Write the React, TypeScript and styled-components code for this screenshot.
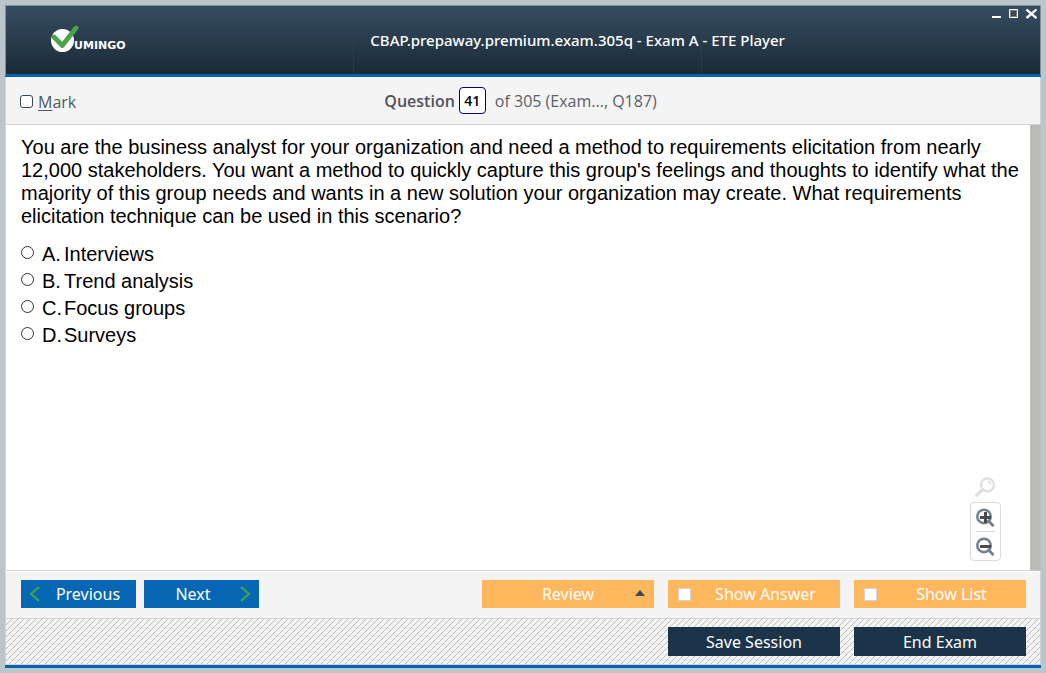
import React from "react";
import styled, { createGlobalStyle } from "styled-components";

const ui = '"Open Sans", "Noto Sans", sans-serif';
const buttonFont = '"Noto Sans", "Open Sans", sans-serif';
const columns = "minmax(0, 348fr) minmax(0, 348fr) minmax(0, 340fr)";

const GlobalStyle = createGlobalStyle`
  *, *::before, *::after { box-sizing: border-box; }
  body { margin: 0; background: #bac6cc; font-family: ${ui}; }
  button, input { font: inherit; margin: 0; }
  button { cursor: pointer; }
`;

const Frame = styled.div`
  min-height: 100vh;
  padding: 5px;
  display: flex;
  flex-direction: column;
  background: #bac6cc;
`;

const PlayerWindow = styled.div`
  flex: 1;
  display: flex;
  flex-direction: column;
  border-bottom: 3px solid #0462b3;
`;

const Header = styled.header`
  position: relative;
  height: 72px;
  display: grid;
  grid-template-columns: ${columns};
  background: linear-gradient(#364e62, #1b2936);
  border: 1px solid #7f9097;
  border-bottom: 3px solid #0462b3;
`;

const HeaderCell = styled.div<{ $divided?: boolean }>`
  display: flex;
  align-items: center;
  white-space: nowrap;
  border-left: ${(p) => (p.$divided ? "1px dotted #323f72" : "0")};
`;

const LogoCell = styled(HeaderCell)`
  padding-left: 44px;
`;

const Title = styled.h1`
  position: relative;
  z-index: 1;
  margin: 0;
  padding-left: 16px;
  color: #fff;
  font: 500 15px/24px ${buttonFont};
`;

const WindowControls = styled.div`
  position: absolute;
  top: 0;
  right: 0;
  display: flex;
`;

const ControlButton = styled.button`
  display: block;
  width: 18px;
  height: 16px;
  padding: 0;
  border: 0;
  background: none;
  svg { display: block; margin: auto; }
`;

const Toolbar = styled.div`
  height: 48px;
  display: grid;
  grid-template-columns: ${columns};
  align-items: center;
  background: #f4f4f4;
  border: 1px solid #d3d3d3;
  border-top: 0;
  color: #5a6066;
  white-space: nowrap;
`;

const MarkLabel = styled.label`
  display: flex;
  align-items: center;
  gap: 5px;
  padding: 2px 0 0 14px;
  font-size: 16px;
  line-height: 24px;
  color: #4a5b69;
  u { text-underline-offset: 2px; }
`;

const MarkBox = styled.input`
  appearance: none;
  width: 13px;
  height: 13px;
  border: 1px solid #34495c;
  border-radius: 3px;
  background: #fff;
  &:checked { background: #34495c; }
`;

const Position = styled.div`
  display: flex;
  align-items: center;
  padding-left: 31px;
  font-size: 16px;
  line-height: 24px;
  label { font-weight: 600; color: #4f5357; }
`;

const NumberInput = styled.input`
  width: 27px;
  height: 27px;
  margin: 0 9px 0 4px;
  padding: 0;
  border: 1px solid #000080;
  border-radius: 4px;
  background: #fff;
  color: #000;
  text-align: center;
  font: 600 14px/24px ${ui};
`;

const Content = styled.main`
  position: relative;
  flex: 1;
  padding: 11px 8px 16px 15px;
  background: #fff;
  border-left: 1px solid #d3d3d3;
  border-right: 11px solid #bcbab6;
  border-bottom: 1px solid #d3d3d3;
  color: #000;
  font-family: "Liberation Sans", Arial, sans-serif;
  font-size: 20px;
  line-height: 23px;
`;

const QuestionText = styled.p`
  margin: 0 0 13px;
`;

const Choices = styled.fieldset`
  margin: 0;
  padding: 0;
  border: 0;
`;

const Choice = styled.label`
  display: grid;
  grid-template-columns: 21px 22px 1fr;
  height: 27px;
  line-height: 24px;
  padding-top: 1px;
`;

const Radio = styled.input`
  appearance: none;
  width: 13px;
  height: 13px;
  border: 1px solid #333;
  border-radius: 50%;
  background: #fff;
  ${Choice} > & { margin-top: 4px; }
  &:checked { background: radial-gradient(#222 35%, #fff 45%); }
`;

const ZoomTools = styled.div`
  position: absolute;
  right: 29px;
  bottom: 9px;
  width: 31px;
  display: flex;
  flex-direction: column;
  align-items: center;
  gap: 5px;
`;

const ZoomPanel = styled.div`
  width: 31px;
  height: 59px;
  display: flex;
  flex-direction: column;
  padding: 0 5px;
  border: 1px solid #dcdcdc;
  border-radius: 4px;
  background: #fff;
`;

const ZoomButton = styled.button`
  flex: 1;
  display: flex;
  align-items: center;
  justify-content: center;
  padding: 0;
  border: 0;
  background: none;
  & + & { border-top: 1px solid #dcdcdc; }
`;

const NavBar = styled.nav`
  display: flex;
  gap: 8px;
  height: 48px;
  padding: 8px 14px 0 15px;
  background: #f4f4f4;
  border: 1px solid #d3d3d3;
  border-top: 1px solid #fff;
`;

const Group = styled.div`
  display: flex;
  gap: 14px;
  margin-left: auto;
`;

const NavButton = styled.button<{ $forward?: boolean }>`
  display: flex;
  flex-direction: ${(p) => (p.$forward ? "row-reverse" : "row")};
  align-items: center;
  width: 115px;
  height: 28px;
  padding: ${(p) => (p.$forward ? "0 8px 0 2px" : "0 0 0 8px")};
  border: 0;
  background: #0867b5;
  color: #fff;
  font: 16px/24px ${buttonFont};
  span { flex: 1; text-align: center; }
`;

const actionShape = `
  display: flex;
  align-items: center;
  justify-content: center;
  width: 172px;
  height: 28px;
  border: 0;
  color: #fff;
  font: 16px/24px ${buttonFont};
  span { flex: 1; text-align: center; }
`;

const ReviewButton = styled.button`
  ${actionShape}
  padding: 0 9px 0 19px;
  background: #ffb75e;
`;

const ToggleLabel = styled.label`
  ${actionShape}
  padding-left: 10px;
  background: #ffb75e;
`;

const ToggleBox = styled.input`
  appearance: none;
  width: 13px;
  height: 13px;
  border: 1px solid #d3d3d3;
  background: #fff;
  &:checked { background: #34495c; }
`;

const SessionButton = styled.button`
  ${actionShape}
  height: 29px;
  padding: 0;
  background: #1b344a;
`;

const SessionBar = styled.footer`
  display: flex;
  height: 46px;
  padding: 8px 14px 0;
  border: 1px solid #d3d3d3;
  border-top: 0;
  background: linear-gradient(135deg, #f4f4f4 0 44%, #bdbdbd 44% 56%, #f4f4f4 56%) 0 0 / 6px 6px;
`;

function Logo() {
  return (
    <svg width="84" height="30" viewBox="0 0 84 30" role="img" aria-label="Vumingo">
      <circle cx="12.5" cy="15.5" r="11.5" fill="#fff" />
      <path d="M4 12l8.300 8.500L26 3" fill="none" stroke="#47a447" strokeWidth="4.800" strokeLinecap="round" strokeLinejoin="round" />
      <text x="24" y="24" fill="#fff" fontFamily="DejaVu Sans, sans-serif" fontSize="11" fontWeight="700">UMINGO</text>
    </svg>
  );
}

type MagnifierKind = "plain" | "in" | "out";

function Magnifier({ kind }: { kind: MagnifierKind }) {
  if (kind === "plain") {
    return (
      <svg width="21" height="20" viewBox="0 0 21 20" fill="none" stroke="#dedede" aria-hidden="true">
        <circle cx="12.4" cy="7.800" r="6.500" strokeWidth="2.200" />
        <path d="M12.500 4.300a3.800 3.800 0 0 1 3.500 3.500" strokeWidth="1.600" />
        <path d="M7.300 13L2 18" strokeWidth="3.400" strokeLinecap="round" />
      </svg>
    );
  }
  return (
    <svg width="19" height="20" viewBox="1 0 19 20" fill="none" aria-hidden="true">
      <circle cx="9" cy="9.400" r="6.700" stroke="#738390" strokeWidth="2.600" />
      <path d="M13.800 14.200L17.700 18.200" stroke="#738390" strokeWidth="3" strokeLinecap="round" />
      <path d="M5 10.500h11" stroke="#4b4b4b" strokeWidth="3" />
      {kind === "in" && <path d="M10.500 5v11" stroke="#4b4b4b" strokeWidth="3" />}
    </svg>
  );
}

function Chevron({ d }: { d: string }) {
  return (
    <svg width="11" height="16" viewBox="0 0 11 16" fill="none" stroke="#3fa648" strokeWidth="2.200" aria-hidden="true">
      <path d={d} />
    </svg>
  );
}

const choices = [
  ["A.", "Interviews"],
  ["B.", "Trend analysis"],
  ["C.", "Focus groups"],
  ["D.", "Surveys"],
];

export default function App() {
  return (
    <>
      <GlobalStyle />
      <Frame>
        <PlayerWindow>
          <Header>
            <LogoCell><Logo /></LogoCell>
            <HeaderCell $divided>
              <Title>CBAP.prepaway.premium.exam.305q - Exam A - ETE Player</Title>
            </HeaderCell>
            <HeaderCell $divided />
            <WindowControls>
              <ControlButton aria-label="Minimize">
                <svg width="12" height="10"><path d="M3 8h9" stroke="#fff" strokeWidth="2" /></svg>
              </ControlButton>
              <ControlButton aria-label="Maximize">
                <svg width="12" height="10" fill="none">
                  <path d="M2.500.5h8v8h-8z" stroke="#fff" />
                  <path d="M3.500 1.500h6v6h-6z" stroke="#807c78" />
                </svg>
              </ControlButton>
              <ControlButton aria-label="Close">
                <svg width="12" height="10"><path d="M1.500.5l10 8.500M11.500.5L1.500 9" stroke="#fff" strokeWidth="2.300" /></svg>
              </ControlButton>
            </WindowControls>
          </Header>
          <Toolbar>
            <MarkLabel><MarkBox type="checkbox" /><span><u>M</u>ark</span></MarkLabel>
            <Position>
              <label htmlFor="question-number">Question</label>
              <NumberInput id="question-number" type="text" defaultValue="41" />
              <span>of 305 (Exam..., Q187)</span>
            </Position>
          </Toolbar>
          <Content>
            <QuestionText>
              You are the business analyst for your organization and need a method to requirements elicitation from nearly
              12,000 stakeholders. You want a method to quickly capture this group's feelings and thoughts to identify what the
              majority of this group needs and wants in a new solution your organization may create. What requirements
              elicitation technique can be used in this scenario?
            </QuestionText>
            <Choices aria-label="Answers">
              {choices.map(([letter, text]) => (
                <Choice key={letter}>
                  <Radio type="radio" name="answer" />
                  <span>{letter}</span>
                  <span>{text}</span>
                </Choice>
              ))}
            </Choices>
            <ZoomTools>
              <Magnifier kind="plain" />
              <ZoomPanel>
                <ZoomButton aria-label="Zoom in"><Magnifier kind="in" /></ZoomButton>
                <ZoomButton aria-label="Zoom out"><Magnifier kind="out" /></ZoomButton>
              </ZoomPanel>
            </ZoomTools>
          </Content>
          <NavBar>
            <NavButton><Chevron d="M10 1L2 8l8 7" /><span>Previous</span></NavButton>
            <NavButton $forward><Chevron d="M1 1l8 7-8 7" /><span>Next</span></NavButton>
            <Group>
              <ReviewButton>
                <span>Review</span>
                <svg width="10" height="8" aria-hidden="true"><path d="M0 6l5-6 5 6z" fill="#34495c" /></svg>
              </ReviewButton>
              <ToggleLabel><ToggleBox type="checkbox" /><span>Show Answer</span></ToggleLabel>
              <ToggleLabel><ToggleBox type="checkbox" /><span>Show List</span></ToggleLabel>
            </Group>
          </NavBar>
          <SessionBar>
            <Group>
              <SessionButton>Save Session</SessionButton>
              <SessionButton>End Exam</SessionButton>
            </Group>
          </SessionBar>
        </PlayerWindow>
      </Frame>
    </>
  );
}
